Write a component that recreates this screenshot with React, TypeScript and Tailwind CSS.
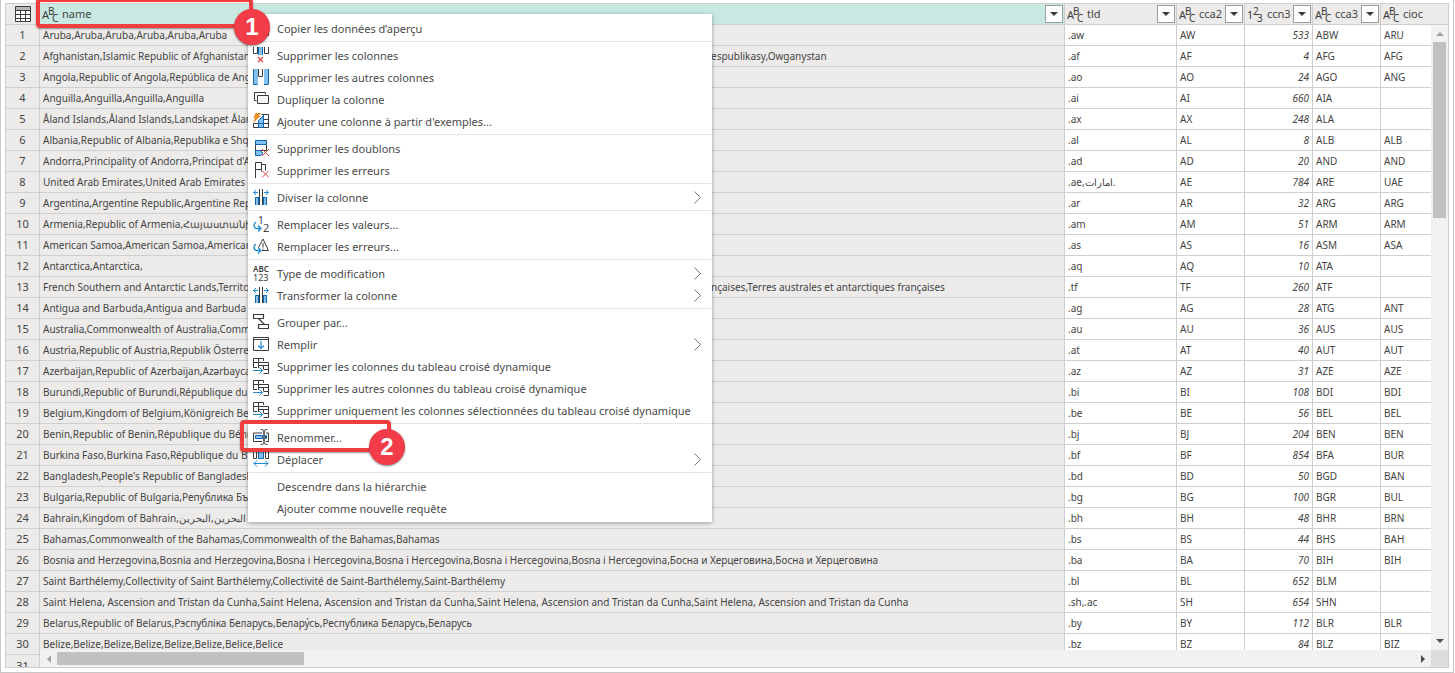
import { Fragment, ReactNode } from "react";

interface Country {
  name: string;
  tail?: string;
  tld: string;
  cca2: string;
  ccn3: number;
  cca3: string;
  cioc: string;
}

interface MenuItem {
  label: string;
  icon?: ReactNode;
  submenu?: boolean;
}

const row = (name: string, tld: string, cca2: string, ccn3: number, cca3: string, cioc = "", tail?: string): Country => ({
  name,
  tail,
  tld,
  cca2,
  ccn3,
  cca3,
  cioc,
});

const countries: Country[] = [
  row("Aruba,Aruba,Aruba,Aruba,Aruba,Aruba", ".aw", "AW", 533, "ABW", "ARU"),
  row("Afghanistan,Islamic Republic of Afghanistan", ".af", "AF", 4, "AFG", "AFG", "espublikasy,Owganystan"),
  row("Angola,Republic of Angola,República de Angola", ".ao", "AO", 24, "AGO", "ANG"),
  row("Anguilla,Anguilla,Anguilla,Anguilla", ".ai", "AI", 660, "AIA"),
  row("Åland Islands,Åland Islands,Landskapet Åland", ".ax", "AX", 248, "ALA"),
  row("Albania,Republic of Albania,Republika e Shqipërisë", ".al", "AL", 8, "ALB", "ALB"),
  row("Andorra,Principality of Andorra,Principat d'Andorra", ".ad", "AD", 20, "AND", "AND"),
  row("United Arab Emirates,United Arab Emirates", ".ae,امارات.", "AE", 784, "ARE", "UAE"),
  row("Argentina,Argentine Republic,Argentine Republic", ".ar", "AR", 32, "ARG", "ARG"),
  row("Armenia,Republic of Armenia,Հայաստանի Հանրապետություն", ".am", "AM", 51, "ARM", "ARM"),
  row("American Samoa,American Samoa,American Samoa", ".as", "AS", 16, "ASM", "ASA"),
  row("Antarctica,Antarctica,", ".aq", "AQ", 10, "ATA"),
  row("French Southern and Antarctic Lands,Territory", ".tf", "TF", 260, "ATF", "", "nçaises,Terres australes et antarctiques françaises"),
  row("Antigua and Barbuda,Antigua and Barbuda", ".ag", "AG", 28, "ATG", "ANT"),
  row("Australia,Commonwealth of Australia,Commonwealth", ".au", "AU", 36, "AUS", "AUS"),
  row("Austria,Republic of Austria,Republik Österreich", ".at", "AT", 40, "AUT", "AUT"),
  row("Azerbaijan,Republic of Azerbaijan,Azərbaycan", ".az", "AZ", 31, "AZE", "AZE"),
  row("Burundi,Republic of Burundi,République du Burundi", ".bi", "BI", 108, "BDI", "BDI"),
  row("Belgium,Kingdom of Belgium,Königreich Belgien", ".be", "BE", 56, "BEL", "BEL"),
  row("Benin,Republic of Benin,République du Bénin", ".bj", "BJ", 204, "BEN", "BEN"),
  row("Burkina Faso,Burkina Faso,République du Burkina", ".bf", "BF", 854, "BFA", "BUR"),
  row("Bangladesh,People's Republic of Bangladesh", ".bd", "BD", 50, "BGD", "BAN"),
  row("Bulgaria,Republic of Bulgaria,Република България", ".bg", "BG", 100, "BGR", "BUL"),
  row("Bahrain,Kingdom of Bahrain,البحرين,البحرين", ".bh", "BH", 48, "BHR", "BRN"),
  row("Bahamas,Commonwealth of the Bahamas,Commonwealth of the Bahamas,Bahamas", ".bs", "BS", 44, "BHS", "BAH"),
  row("Bosnia and Herzegovina,Bosnia and Herzegovina,Bosna i Hercegovina,Bosna i Hercegovina,Bosna i Hercegovina,Bosna i Hercegovina,Босна и Херцеговина,Босна и Херцеговина", ".ba", "BA", 70, "BIH", "BIH"),
  row("Saint Barthélemy,Collectivity of Saint Barthélemy,Collectivité de Saint-Barthélemy,Saint-Barthélemy", ".bl", "BL", 652, "BLM"),
  row("Saint Helena, Ascension and Tristan da Cunha,Saint Helena, Ascension and Tristan da Cunha,Saint Helena, Ascension and Tristan da Cunha,Saint Helena, Ascension and Tristan da Cunha", ".sh,.ac", "SH", 654, "SHN"),
  row("Belarus,Republic of Belarus,Рэспубліка Беларусь,Белару́сь,Республика Беларусь,Беларусь", ".by", "BY", 112, "BLR", "BLR"),
  row("Belize,Belize,Belize,Belize,Belize,Belize,Belice,Belice", ".bz", "BZ", 84, "BLZ", "BIZ"),
];

const DARK = "#3b3b3b";
const BLUE = "#1e88d0";
const DEEP = "#0f66b0";
const SKY = "#83c0ee";
const RED = "#e8413c";

function Icon({ children }: { children: ReactNode }) {
  return (
    <svg width="16" height="16" viewBox="0 0 16 16" fill="none" aria-hidden="true">
      {children}
    </svg>
  );
}

const copyIcon = (
  <Icon>
    <path d="M2.5 1.5h7v11h-7zM5.5 3.5h10v12h-10z" fill="#fff" stroke={DARK} />
  </Icon>
);

const removeColumns = (
  <Icon>
    <path d="M.5 0v6.5h4V0M15.5 0v6.5h-4V0" stroke={DARK} />
    <path d="M5 0h5v8H5z" fill={SKY} />
    <path d="M5.5 0v8M9.5 0v8" stroke={DEEP} />
    <path d="M5 10l5 5M10 10l-5 5" stroke={RED} strokeWidth="1.2" />
  </Icon>
);

const removeOthers = (
  <Icon>
    <path d="M1 0h4v16H1zM11 0h4v16h-4z" fill={SKY} />
    <path d="M.5 0v15.5H4M15.5 0v15.5H11" stroke={DEEP} />
    <path d="M5.5 0v7.5h4V0" stroke={DARK} />
  </Icon>
);

const duplicate = (
  <Icon>
    <path d="M3.5 9.5h-2v-8h11v2" stroke={DARK} />
    <path d="M4.5 4.5h11v8h-11z" fill="#f8f8f8" stroke={DARK} />
  </Icon>
);

const fromExamples = (
  <Icon>
    <path d="M8.5 1.5h7v13H.5v-4h15M10.5 1.5v13M10 6.5h5.5" stroke={DARK} />
    <path d="M5.5 14.5v-7l5-5v12z" fill={SKY} stroke={DEEP} />
    <path d="M5.5 10.5h5" stroke={DEEP} />
    <path d="M3 0h4.500L5 3h2.200L.6 9l2-4.300H.8z" fill="#f0932b" stroke="#d9730d" strokeWidth=".6" />
  </Icon>
);

const removeDuplicates = (
  <Icon>
    <path d="M2.5.5h11v4h-11z" fill={SKY} stroke={DEEP} />
    <path d="M2.5 4.5v6h11v-6" stroke={DARK} />
    <path d="M7 10.5H2.5v5H8l2-2.500z" fill={SKY} stroke={DEEP} />
    <path d="M9 9l7 7M16 9l-7 7" stroke={RED} />
  </Icon>
);

const removeErrors = (
  <Icon>
    <path d="M2.5 16V.5h6v7h-6M8.5 2.5h4v6M8.5 7.5v2" stroke={DARK} />
    <path d="M9 8.5l7 7M16 8.5l-7 7" stroke={RED} />
  </Icon>
);

const splitColumn = (
  <Icon>
    <path d="M2 8h4v8H2zM10 8h4v8h-4z" fill={SKY} />
    <path d="M2.5 16V8.5H6M13.5 16V8.5H10M5.5 8v8M10.5 8v8" stroke={DEEP} />
    <path d="M6.5 0v16M9.5 0v16" stroke={DARK} />
    <path d="M5 3.5H.8M3 1L.6 3.5 3 6M11 3.5h4.2M13 1l2.4 2.5L13 6" stroke={BLUE} />
  </Icon>
);

const swapArrow = "M3 6C.5 7.5.2 11 3 12.5h4M5 9.5l3 3-3 3";

const replaceValues = (
  <Icon>
    <path d={swapArrow} stroke={BLUE} strokeWidth="1.3" />
    <text x="5" y="8" fontSize="10" fill={DARK}>1</text>
    <text x="10" y="16" fontSize="11" fill={DARK}>2</text>
  </Icon>
);

const replaceErrors = (
  <Icon>
    <path d={swapArrow} stroke={BLUE} strokeWidth="1.3" />
    <path d="M5.5 9.5L10 1l5.500 11.500H9M10 5v4.500M10 10.500v1" stroke={DARK} />
  </Icon>
);

const changeType = (
  <Icon>
    <text x="0" y="7" fontSize="8" fontWeight="600" fill={DARK}>ABC</text>
    <text x="0" y="16" fontSize="9" fill={DARK}>123</text>
  </Icon>
);

const groupBy = (
  <Icon>
    <path d="M.5.5h10v4H.5zM5.500 10.500h10v4h-10zM5.500 4.500l6 6" stroke={DARK} strokeWidth="1.2" />
  </Icon>
);

const fill = (
  <Icon>
    <path d="M.5 1.500h15v13H.5zM.5 3.500h15" stroke={DARK} />
    <path d="M8 5v7.500M5 9.500l3 3 3-3" stroke={BLUE} strokeWidth="1.2" />
  </Icon>
);

const pivot = (
  <Icon>
    <path d="M4 9.500H.5v-9h10V3M.5 4.500h5M5.500.5v4" stroke={DARK} />
    <path d="M5.500 10V4.500h10v11h-5M5.500 7.500h10M10.500 7.500V11M10.500 11.500h5" stroke={DARK} />
    <path d="M0 12.500h9.500M6.500 9.500l3 3-3 3" stroke={BLUE} />
  </Icon>
);

const rename = (
  <Icon>
    <path d="M9 4H.5v8.500H9M13 4h2.500v8.500H13" stroke={DARK} />
    <path d="M2.500 6.500h7v3h-7zM12.500 6.500h1v3h-1z" fill={SKY} stroke={DEEP} />
    <path d="M7.500.5c2 0 3.500.5 3.500 2v11c0 1.500-1.500 2-3.500 2M14.500.5c-2 0-3.500.5-3.500 2v11c0 1.500 1.500 2 3.500 2" stroke={DARK} />
  </Icon>
);

const move = (
  <Icon>
    <path d="M.5 0v7.500h3V0M12.500 0v7.500h3V0" stroke={DARK} />
    <path d="M5.500-1v8.500h5V-1z" fill={SKY} stroke={DEEP} />
    <path d="M.8 12.500h14.400M4 9.500l-3 3 3 3M12 9.500l3 3-3 3" stroke={BLUE} />
  </Icon>
);

const menuGroups: MenuItem[][] = [
  [{ label: "Copier les données d’aperçu", icon: copyIcon }],
  [
    { label: "Supprimer les colonnes", icon: removeColumns },
    { label: "Supprimer les autres colonnes", icon: removeOthers },
    { label: "Dupliquer la colonne", icon: duplicate },
    { label: "Ajouter une colonne à partir d'exemples...", icon: fromExamples },
  ],
  [
    { label: "Supprimer les doublons", icon: removeDuplicates },
    { label: "Supprimer les erreurs", icon: removeErrors },
  ],
  [{ label: "Diviser la colonne", icon: splitColumn, submenu: true }],
  [
    { label: "Remplacer les valeurs...", icon: replaceValues },
    { label: "Remplacer les erreurs...", icon: replaceErrors },
  ],
  [
    { label: "Type de modification", icon: changeType, submenu: true },
    { label: "Transformer la colonne", icon: splitColumn, submenu: true },
  ],
  [
    { label: "Grouper par...", icon: groupBy },
    { label: "Remplir", icon: fill, submenu: true },
    { label: "Supprimer les colonnes du tableau croisé dynamique", icon: pivot },
    { label: "Supprimer les autres colonnes du tableau croisé dynamique", icon: pivot },
    { label: "Supprimer uniquement les colonnes sélectionnées du tableau croisé dynamique", icon: pivot },
  ],
  [
    { label: "Renommer...", icon: rename },
    { label: "Déplacer", icon: move, submenu: true },
  ],
  [{ label: "Descendre dans la hiérarchie" }, { label: "Ajouter comme nouvelle requête" }],
];

function TypeIcon({ chars }: { chars: string }) {
  return (
    <svg width="17" height="18" viewBox="0 0 17 18" className="mr-[3px] shrink-0" fill={DARK} aria-hidden="true">
      <text x="0" y="14" fontSize="11">{chars[0]}</text>
      <text x="6" y="10" fontSize="10">{chars[1]}</text>
      <text x="10" y="17" fontSize="10">{chars[2]}</text>
    </svg>
  );
}

function HeaderCell({ label, chars = "ABC", selected, last }: { label: string; chars?: string; selected?: boolean; last?: boolean }) {
  return (
    <th
      scope="col"
      className={`h-[21px] border-b border-[#cfcfcf] p-0 font-normal ${selected ? "bg-[#c8e9e1]" : "bg-[#ecebea]"} ${last ? "" : "border-r"}`}
    >
      <div className="flex h-5 items-center pl-0.5 pr-px text-[11px]">
        <TypeIcon chars={chars} />
        <span className="min-w-0 flex-1 text-left">{label}</span>
        {!last && (
          <button
            aria-label={`Filtrer ${label}`}
            className="flex size-[18px] shrink-0 items-center justify-center border border-[#9c9c9c] bg-white"
          >
            <svg width="8" height="4" viewBox="0 0 8 4" fill={DARK} aria-hidden="true">
              <path d="M0 0h8L4 4z" />
            </svg>
          </button>
        )}
      </div>
    </th>
  );
}

function Arrow({ d, color }: { d: string; color: string }) {
  return (
    <svg width="8" height="8" viewBox="0 0 8 8" fill={color} aria-hidden="true">
      <path d={d} />
    </svg>
  );
}

function ContextMenu() {
  return (
    <div role="menu" className="absolute left-[248px] top-[14px] w-[464px] bg-white pt-1 pb-0.5 shadow-[0_1px_4px_rgba(0,0,0,0.35)]">
      {menuGroups.map((group, i) => (
        <Fragment key={i}>
          {i > 0 && <hr className="mx-px mt-px mb-[3px] border-[#e4e4e4]" />}
          {group.map((item) => (
            <button
              key={item.label}
              role="menuitem"
              className="flex h-[22px] w-full items-center gap-2 whitespace-nowrap pl-[5px] pr-2.5 text-left text-[11px] text-[#4a4a4a]"
            >
              <span className="w-4 shrink-0 pb-0.5">{item.icon}</span>
              <span className="flex-1">{item.label}</span>
              {item.submenu && (
                <svg width="9" height="15" viewBox="0 0 9 15" fill="none" stroke="#777" aria-hidden="true">
                  <path d="M1.5.5l6 6-6 6" />
                </svg>
              )}
            </button>
          ))}
        </Fragment>
      ))}
    </div>
  );
}

function Badge({ children, className }: { children: ReactNode; className: string }) {
  return (
    <span
      className={`absolute flex size-9 items-center justify-center rounded-full bg-[#f23c48] font-['Liberation_Sans',sans-serif] text-2xl font-bold text-white shadow-[0_1px_2px_rgba(0,0,0,0.5)] ${className}`}
    >
      {children}
    </span>
  );
}

export default function App() {
  const cell = "h-[21px] border-b border-r border-[#cfcfcf] p-0 pl-[3px]";

  return (
    <main className="relative flex h-screen flex-col overflow-hidden bg-white font-['Noto_Sans','Open_Sans',sans-serif] text-[#444]">
      <div className="mr-px flex min-h-0 flex-1 border border-t-0 border-[#c8c8c8] px-1 pt-[3px] pb-1">
        <div className="relative min-w-0 flex-1 overflow-hidden border border-[#cfcfcf]">
          <table className="w-full table-fixed border-separate border-spacing-0 text-[10px] leading-4">
            <colgroup>
              <col className="w-[34px]" />
              <col />
              <col className="w-[112px]" />
              <col className="w-[68px]" />
              <col className="w-[68px]" />
              <col className="w-[68px]" />
              <col className="w-[67px]" />
            </colgroup>
            <thead>
              <tr>
                <th className="h-[21px] border-b border-r border-[#cfcfcf] bg-[#ecebea] p-0">
                  <svg width="16" height="16" viewBox="0 0 16 16" fill="none" className="mx-auto" aria-label="Table" role="img">
                    <path d="M.5.5h15v15H.5z" fill="#fff" stroke={DARK} />
                    <path d="M1 1h14v3H1z" fill="#b5b5b5" />
                    <path d="M0 4.500h16M0 8.500h16M0 12.500h16M5.500 4v12M10.500 4v12" stroke={DARK} />
                  </svg>
                </th>
                <HeaderCell label="name" selected />
                <HeaderCell label="tld" />
                <HeaderCell label="cca2" />
                <HeaderCell label="ccn3" chars="123" />
                <HeaderCell label="cca3" />
                <HeaderCell label="cioc" last />
              </tr>
            </thead>
            <tbody>
              {countries.map((c, i) => (
                <tr key={c.cca3}>
                  <th scope="row" className="h-[21px] border-b border-r border-[#cfcfcf] bg-[#ecebea] p-0 text-[11px] font-normal">
                    {i + 1}
                  </th>
                  <td className={`${cell} bg-[#ecebea]`}>
                    <div className="flex whitespace-nowrap">
                      <span className={c.tail ? "w-[668px] shrink-0 overflow-hidden" : ""}>{c.name}</span>
                      {c.tail && <span>{c.tail}</span>}
                    </div>
                  </td>
                  <td className={cell}>{c.tld}</td>
                  <td className={cell}>{c.cca2}</td>
                  <td className={`${cell} pr-[3px] text-right italic`}>{c.ccn3}</td>
                  <td className={cell}>{c.cca3}</td>
                  <td className={cell}>{c.cioc}</td>
                </tr>
              ))}
              <tr>
                <th scope="row" className="h-[21px] border-r border-[#cfcfcf] bg-[#ecebea] p-0 text-[11px] font-normal">
                  31
                </th>
                <td colSpan={6} className="bg-[#ecebea]" />
              </tr>
            </tbody>
          </table>

          <div className="absolute top-[21px] right-0 bottom-4 flex w-[17px] flex-col items-center bg-[#f1f1f1]">
            <div className="flex h-[17px] items-center">
              <Arrow d="M0 6h8L4 2z" color="#a3a3a3" />
            </div>
            <div className="h-[176px] w-[13px] bg-[#c1c1c1]" />
            <div className="mt-auto flex h-5 items-center">
              <Arrow d="M0 2h8L4 6z" color="#4a4a4a" />
            </div>
          </div>

          <div className="absolute right-0 bottom-0 left-[34px] flex h-[17px] items-center bg-[#f1f1f1]">
            <div className="flex w-[17px] justify-center">
              <Arrow d="M6 0v8L2 4z" color="#a3a3a3" />
            </div>
            <div className="h-[13px] w-[247px] bg-[#c1c1c1]" />
            <div className="ml-auto flex w-[17px] justify-center">
              <Arrow d="M2 0v8l4-4z" color="#4a4a4a" />
            </div>
            <div className="h-full w-[17px] bg-[#dcdcdc]" />
          </div>
        </div>
      </div>

      <ContextMenu />

      <div className="absolute -top-0.5 left-9 h-[30px] w-[217px] rounded-sm border-4 border-[#f03e3e] shadow-[0_1px_2px_rgba(0,0,0,0.4)]" />
      <Badge className="left-[234px] top-[9px]">1</Badge>
      <div className="absolute left-[240px] top-[420px] h-8 w-[151px] rounded border-4 border-[#f03e3e] shadow-[0_1px_2px_rgba(0,0,0,0.4)]" />
      <Badge className="left-[369px] top-[429px]">2</Badge>
    </main>
  );
}
